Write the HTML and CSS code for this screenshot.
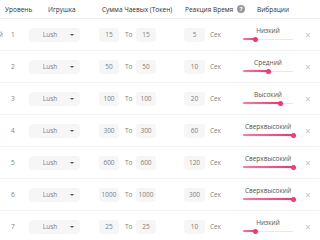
FILE: index.html
```html
<!DOCTYPE html>
<html lang="ru">
<head>
    <meta charset="UTF-8">
    <meta name="viewport" content="width=device-width, initial-scale=1.0">
    <title>Вибрации</title>
    <link rel="stylesheet" href="styles.css">
</head>
<body>

    <div class="table">
        <!-- шапка -->
        <div class="head">
            <div class="h-lvl">Уровень</div>
            <div class="h-toy">Игрушка</div>
            <div class="h-sum">Сумма Чаевых (Токен)</div>
            <div class="h-time">Реакция Время <span class="help">?</span></div>
            <div class="h-vib">Вибрации</div>
        </div>

        <div class="row">
            <div class="stub"><span>й</span></div>
            <div class="lvl">1</div>
            <div class="select">Lush <span class="caret"></span></div>
            <div class="num from">15</div><span class="to">To</span><div class="num">15</div>
            <div class="num time">5</div><span class="sec">Сек</span>
            <div class="vib">
                <div class="vib-label">Низкий</div>
                <div class="track"><div class="fill" style="width: 25%"></div></div>
            </div>
            <div class="close">×</div>
        </div>

        <div class="row">
            <div class="stub"></div>
            <div class="lvl">2</div>
            <div class="select">Lush <span class="caret"></span></div>
            <div class="num from">50</div><span class="to">To</span><div class="num">50</div>
            <div class="num time">10</div><span class="sec">Сек</span>
            <div class="vib">
                <div class="vib-label">Средний</div>
                <div class="track"><div class="fill" style="width: 50%"></div></div>
            </div>
            <div class="close">×</div>
        </div>

        <div class="row">
            <div class="stub"></div>
            <div class="lvl">3</div>
            <div class="select">Lush <span class="caret"></span></div>
            <div class="num from">100</div><span class="to">To</span><div class="num">100</div>
            <div class="num time">20</div><span class="sec">Сек</span>
            <div class="vib">
                <div class="vib-label">Высокий</div>
                <div class="track"><div class="fill" style="width: 75%"></div></div>
            </div>
            <div class="close">×</div>
        </div>

        <div class="row">
            <div class="stub"></div>
            <div class="lvl">4</div>
            <div class="select">Lush <span class="caret"></span></div>
            <div class="num from">300</div><span class="to">To</span><div class="num">300</div>
            <div class="num time">60</div><span class="sec">Сек</span>
            <div class="vib">
                <div class="vib-label">Сверхвысокий</div>
                <div class="track"><div class="fill" style="width: 100%"></div></div>
            </div>
            <div class="close">×</div>
        </div>

        <div class="row">
            <div class="stub"></div>
            <div class="lvl">5</div>
            <div class="select">Lush <span class="caret"></span></div>
            <div class="num from">600</div><span class="to">To</span><div class="num">600</div>
            <div class="num time">120</div><span class="sec">Сек</span>
            <div class="vib">
                <div class="vib-label">Сверхвысокий</div>
                <div class="track"><div class="fill" style="width: 100%"></div></div>
            </div>
            <div class="close">×</div>
        </div>

        <div class="row">
            <div class="stub"></div>
            <div class="lvl">6</div>
            <div class="select">Lush <span class="caret"></span></div>
            <div class="num from">1000</div><span class="to">To</span><div class="num">1000</div>
            <div class="num time">300</div><span class="sec">Сек</span>
            <div class="vib">
                <div class="vib-label">Сверхвысокий</div>
                <div class="track"><div class="fill" style="width: 100%"></div></div>
            </div>
            <div class="close">×</div>
        </div>

        <div class="row">
            <div class="stub"></div>
            <div class="lvl">7</div>
            <div class="select">Lush <span class="caret"></span></div>
            <div class="num from">25</div><span class="to">To</span><div class="num">25</div>
            <div class="num time">10</div><span class="sec">Сек</span>
            <div class="vib">
                <div class="vib-label">Низкий</div>
                <div class="track"><div class="fill" style="width: 25%"></div></div>
            </div>
            <div class="close">×</div>
        </div>
    </div>

</body>
</html>
```

FILE: styles.css
```css
body {
    margin: 0;
    background: #fff;
    font-family: "Open Sans", Arial, sans-serif;
    font-size: 6.5px;
    color: #808080;
    overflow: hidden;
}
.table {
    width: 320px;
}
.head {
    display: flex;
    align-items: center;
    height: 18px;
    border-bottom: 1px solid #eee;
    color: #333;
}
.h-lvl {
    width: 43px;
    padding-left: 5px;
}
.h-toy {
    width: 54px;
}
.h-sum {
    width: 83px;
}
.h-time {
    width: 72px;
    display: flex;
    align-items: center;
}
.help {
    display: inline-flex;
    align-items: center;
    justify-content: center;
    width: 8px;
    height: 8px;
    margin-left: 4px;
    border-radius: 50%;
    background: #999;
    color: #fff;
    font-size: 6px;
    font-weight: bold;
}
.row {
    display: flex;
    align-items: center;
    height: 31px;
    border-bottom: 1px solid #f2f2f2;
}
.stub {
    width: 3px;
    display: flex;
    justify-content: flex-end;
}
.lvl {
    width: 18px;
    padding-left: 8px;
}
.select {
    width: 51px;
    height: 14px;
    display: flex;
    align-items: center;
    justify-content: center;
    gap: 13px;
    padding-left: 8px;
    box-sizing: border-box;
    background: #f6f6f6;
    border-radius: 4px;
}
.caret {
    width: 0;
    height: 0;
    border-left: 2px solid transparent;
    border-right: 2px solid transparent;
    border-top: 2.5px solid #555;
}
.num {
    width: 20px;
    height: 14px;
    display: flex;
    align-items: center;
    justify-content: center;
    background: #f6f6f6;
    border-radius: 3px;
}
.num.from {
    margin-left: 19px;
}
.to {
    width: 11px;
    margin-left: 6px;
}
.num.time {
    width: 21px;
    margin-left: 28px;
}
.sec {
    width: 12px;
    margin-left: 5px;
}
.vib {
    width: 50px;
    margin-left: 21px;
    display: flex;
    flex-direction: column;
    align-items: center;
    margin-top: -3px;
}
.vib-label {
    color: #555;
    line-height: 8px;
    margin-bottom: 4px;
}
.track {
    position: relative;
    width: 50px;
    height: 1px;
    background: #e8e8e8;
}
.fill {
    position: relative;
    height: 2px;
    top: -0.5px;
    background: linear-gradient(to right, #ff7a9e, #ff2f6e);
    border-radius: 1px;
}
.fill::after {
    content: "";
    position: absolute;
    right: -2.5px;
    top: -1.5px;
    width: 5px;
    height: 5px;
    border-radius: 50%;
    background: #ff3170;
}
.close {
    margin-left: 12px;
    color: #c4c4c4;
    font-size: 10px;
    line-height: 10px;
}
```
